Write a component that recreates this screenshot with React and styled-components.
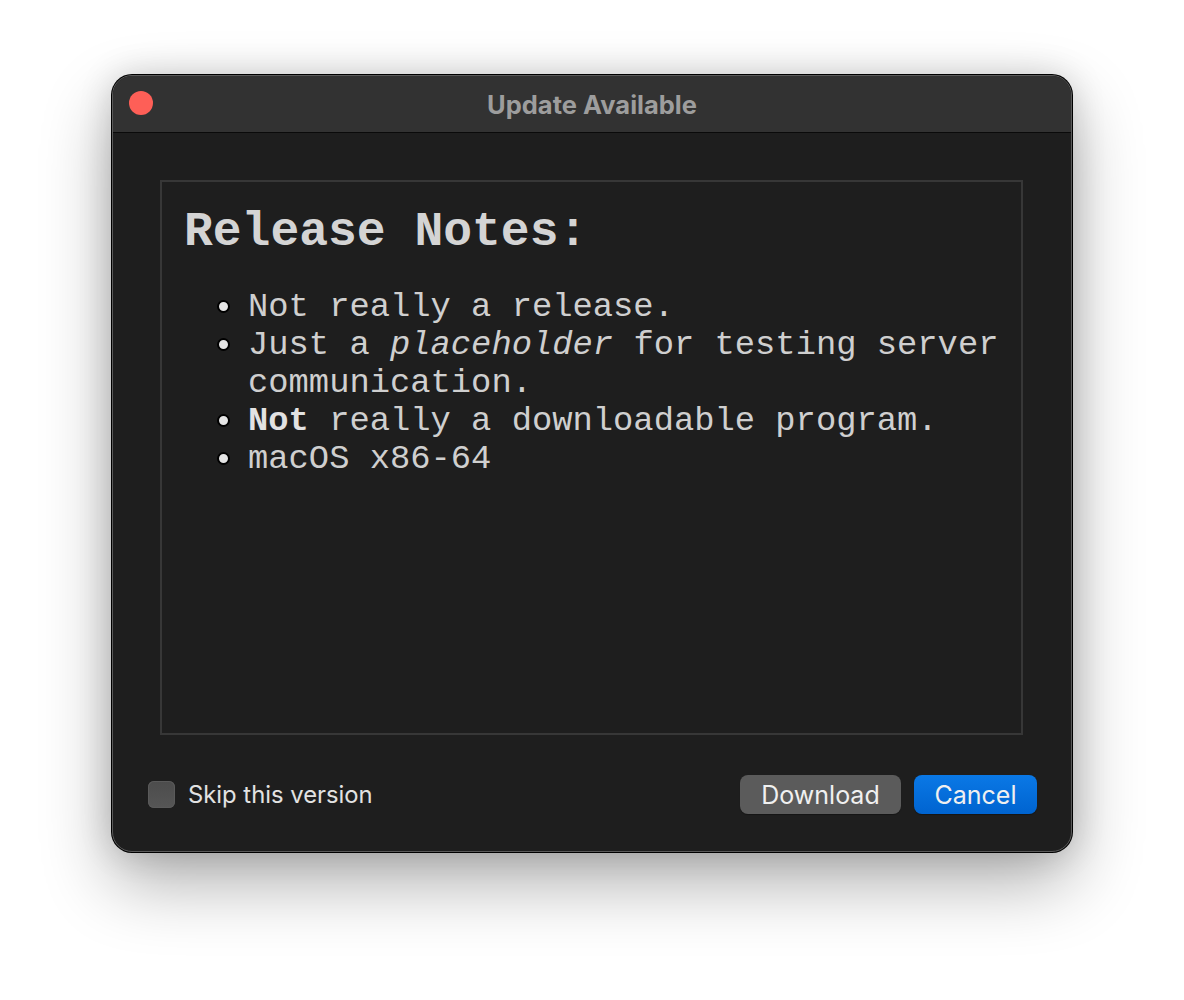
import styled, { createGlobalStyle } from "styled-components";

const GlobalStyle = createGlobalStyle`
  html, body {
    margin: 0;
    background: #ffffff;
  }
  body {
    min-height: 100vh;
    box-sizing: border-box;
    padding: 75px 0 0 112px;
    font-family: "Inter", "Liberation Sans", sans-serif;
  }
`;

const Window = styled.div`
  width: 960px;
  height: 777px;
  box-sizing: border-box;
  display: flex;
  flex-direction: column;
  background: #1e1e1e;
  border-radius: 20px;
  border: 1px solid #5a5a5a;
  box-shadow: 0 0 0 1px #000000, 0 30px 70px rgba(0, 0, 0, 0.32),
    0 0 34px rgba(0, 0, 0, 0.16);
  overflow: hidden;
`;

const TitleBar = styled.div`
  position: relative;
  height: 56px;
  flex-shrink: 0;
  display: flex;
  align-items: center;
  justify-content: center;
  background: #323232;
  border-bottom: 1px solid #0a0a0a;
`;

const CloseButton = styled.span`
  position: absolute;
  left: 16px;
  top: 15px;
  width: 24px;
  height: 24px;
  border-radius: 50%;
  background: #fe5f57;
`;

const Title = styled.h1`
  margin: 0;
  font-size: 25.5px;
  font-weight: 700;
  color: #9d9d9d;
`;

const Body = styled.div`
  flex: 1;
  display: flex;
  flex-direction: column;
  padding: 47px 48px 0 47px;
`;

const NotesPanel = styled.div`
  height: 555px;
  box-sizing: border-box;
  border: 2px solid #373737;
  padding: 14px 22px;
  font-family: "Liberation Mono", "Courier New", monospace;
  color: #cfcfcf;
`;

const NotesHeading = styled.h2`
  margin: 0 0 20px;
  font-size: 48px;
  line-height: 72px;
  font-weight: 700;
  color: #d4d4d4;
`;

const NotesList = styled.ul`
  margin: 0;
  padding-left: 64px;
  font-size: 33.8px;
  line-height: 38px;
  list-style: none;
`;

const NotesItem = styled.li`
  position: relative;

  &::before {
    content: "";
    position: absolute;
    left: -31px;
    top: 12px;
    width: 13px;
    height: 13px;
    border-radius: 50%;
    background: #e4e4e4;
    border: 2px solid #000000;
    box-sizing: border-box;
  }

  & em {
    font-style: italic;
  }

  & strong {
    font-weight: 700;
    color: #e2e2e2;
  }
`;

const Footer = styled.div`
  display: flex;
  align-items: center;
  justify-content: space-between;
  padding: 40px 34px 0 35px;
  margin-left: -47px;
  margin-right: -48px;
`;

const SkipLabel = styled.label`
  display: flex;
  align-items: center;
  gap: 13px;
  font-size: 23.8px;
  color: #e2e2e2;
`;

const CheckBox = styled.span`
  width: 27px;
  height: 27px;
  border-radius: 6px;
  background: linear-gradient(#4c4c4c, #565656);
  box-shadow: inset 0 0 0 1px #5a5a5a;
`;

const ButtonRow = styled.div`
  display: flex;
  gap: 13px;
`;

const Button = styled.button`
  width: ${(p) => (p.$primary ? "123px" : "161px")};
  height: 39px;
  padding: 0;
  border: none;
  border-radius: 8px;
  font-family: "Inter", "Liberation Sans", sans-serif;
  font-size: 25px;
  color: #f0f0f0;
  background: ${(p) =>
    p.$primary ? "linear-gradient(#0a78e6, #0064d0)" : "#5b5b5b"};
  box-shadow: 0 1px 1px rgba(0, 0, 0, 0.3);
`;

export default function App() {
  return (
    <>
      <GlobalStyle />
      <Window>
        <TitleBar>
          <CloseButton />
          <Title>Update Available</Title>
        </TitleBar>
        <Body>
          <NotesPanel>
            <NotesHeading>Release Notes:</NotesHeading>
            <NotesList>
              <NotesItem>Not really a release.</NotesItem>
              <NotesItem>
                Just a <em>placeholder</em> for testing server communication.
              </NotesItem>
              <NotesItem>
                <strong>Not</strong> really a downloadable program.
              </NotesItem>
              <NotesItem>macOS x86-64</NotesItem>
            </NotesList>
          </NotesPanel>
          <Footer>
            <SkipLabel>
              <CheckBox />
              Skip this version
            </SkipLabel>
            <ButtonRow>
              <Button>Download</Button>
              <Button $primary>Cancel</Button>
            </ButtonRow>
          </Footer>
        </Body>
      </Window>
    </>
  );
}
